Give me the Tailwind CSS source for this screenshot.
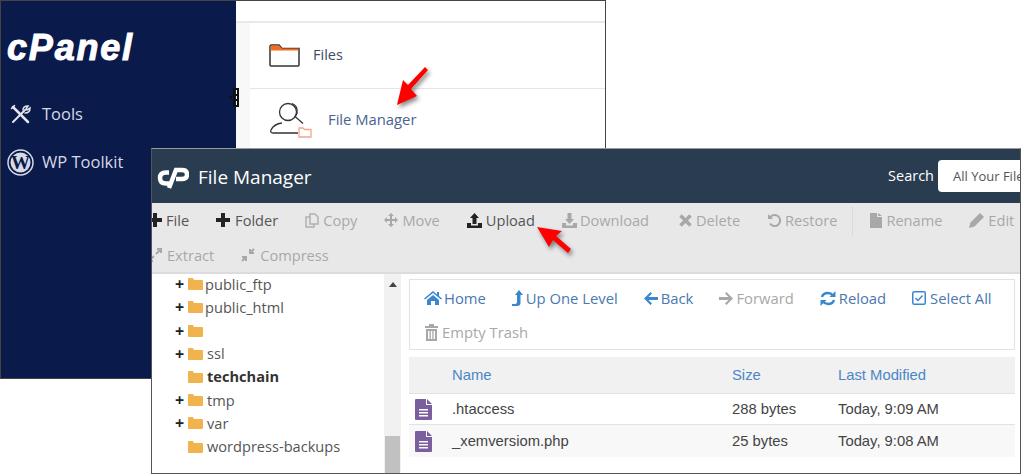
<!DOCTYPE html>
<html lang="en">
<head>
<meta charset="UTF-8">
<title>cPanel File Manager</title>
<script src="https://cdn.jsdelivr.net/npm/@tailwindcss/browser@4"></script>
</head>
<body class="bg-white">
<div class="relative w-[1024px] h-[476px] overflow-hidden bg-white font-['Open_Sans',sans-serif]">

  <!-- back window: cPanel home -->
  <div class="absolute left-0 top-0 w-[606px] h-[379px] border border-[#444] flex">
    <aside class="w-[235px] bg-[#0a1a4a] text-[#d6d9e6] flex flex-col">
      <div class="h-[85px] pl-[6px] pt-[23px] text-[36px] leading-[48px] font-['Liberation_Sans',sans-serif] font-bold italic text-white tracking-[1.800px] [-webkit-text-stroke:1px_white]">cPanel</div>
      <div class="h-[48px] flex items-center pl-[9px] gap-[11px] text-[16.500px] pt-[8px]">
        <svg class="w-[21px] h-[21px]" viewBox="0 0 21 21" fill="none" stroke="#e4e6ee" stroke-width="2" stroke-linecap="round"><path d="M3 18 15 6"/><path d="M13 6q0-4 5-4l-2 3 1 1 3-2q0 5-5 5" stroke-width="1.500"/><path d="M3 3 18 18" stroke-width="2.500"/><path d="M1.500 4.500 4.500 1.500" stroke-width="1.500"/></svg>
        <span>Tools</span>
      </div>
      <div class="h-[48px] flex items-center pl-[6px] gap-[8px] text-[16.500px] pt-[8px]">
        <svg class="w-[27px] h-[27px]" viewBox="0 0 27 27"><circle cx="13.500" cy="13.500" r="12.500" fill="none" stroke="#d6d9e6" stroke-width="1.500"/><circle cx="13.500" cy="13.500" r="10" fill="#d6d9e6"/><text x="13.500" y="20" text-anchor="middle" font-family="Liberation Serif, serif" font-weight="700" font-size="19" fill="#0a1a4a">W</text></svg>
        <span>WP Toolkit</span>
      </div>
    </aside>
    <div class="flex-1 bg-white pt-[20px] flex flex-col">
      <div class="flex-1 flex bg-[#f8f8f8] border-t-2 border-[#e9e9e9]">
        <div class="w-[14px]"></div>
        <div class="flex-1 bg-white">
          <div class="h-[66px] pb-[1px] flex items-center border-b border-[#e5e5e5] pl-[19px] gap-[13px] text-[14.500px] text-[#3d4a66]">
            <svg class="w-[31px] h-[23px]" viewBox="0 0 31 23"><path d="M1 21V2.500Q1 1 2.500 1H10l3 3.500H30V21q0 1-1 1H2q-1 0-1-1Z" fill="#fff" stroke="#333" stroke-width="1.500"/><path d="M1.500 2.500 2.500 1.500H10l3 3H29.500V6.500H1.500Z" fill="#f26d21"/></svg>
            <span>Files</span>
          </div>
          <div class="h-[60px] flex items-center pl-[20px] gap-[16px] text-[14.800px] text-[#4a6491]">
            <svg class="w-[42px] h-[38px]" viewBox="0 0 42 38" fill="none"><circle cx="18" cy="12" r="8.500" stroke="#333" stroke-width="1.300"/><path d="M22 3.500q6 2 5 10l-2 3 8 7" stroke="#333" stroke-width="1.300"/><path d="M28 33H3q-3 0-2-3 3-6 11-7" stroke="#333" stroke-width="1.300"/><path d="M29 37V28h4l1.500 1.500H41V37Z" fill="#fff" stroke="#f4a58a" stroke-width="1.300"/></svg>
            <span>File Manager</span>
          </div>
        </div>
      </div>
    </div>
  </div>

  <!-- resize handle on the divider -->
  <svg class="absolute left-[228px] top-[88px] w-[12px] h-[19px]" viewBox="0 0 12 19" fill="none" stroke="#111" stroke-width="2"><path d="M6 1h4v17H6ZM6 7h4M6 12h4"/><circle cx="2.500" cy="9.500" r="1.500" fill="#111" stroke="none"/></svg>

  <!-- front window: File Manager -->
  <div class="absolute left-[151px] top-[148px] w-[870px] h-[326px] border border-[#555] border-t-[#999] bg-white flex flex-col overflow-hidden">
    <header class="h-[54px] bg-[#2a3c50] flex items-center text-white shrink-0">
      <svg class="ml-[5px] mt-[3px] w-[32px] h-[22px]" viewBox="0 0 32 22" fill="none" stroke="#fff" stroke-width="4.500"><path d="M12 5.500H9Q3 5.500 3 11t6 5.500h3"/><path d="M12 21 19 3h6q5 0 5 4.500T25 12h-6"/></svg>
      <span class="ml-[9px] mt-[3px] text-[19px]">File Manager</span>
      <span class="ml-auto text-[14.500px]">Search</span>
      <div class="ml-[4px] w-[82px] h-[32px] bg-white rounded-l-[4px] pl-[15px] text-[13px] leading-[32px] text-[#555] whitespace-nowrap overflow-hidden">All Your Files</div>
    </header>

    <div class="h-[71px] shrink-0 bg-[#e8e8e8] border-b-2 border-[#dcdcdc] text-[14.600px] text-[#a8a8a8]">
      <div class="h-[35px] flex items-center gap-[27px] -ml-[4px] whitespace-nowrap">
        <span class="flex items-center gap-[4px] text-[#555]"><svg class="w-[14px] h-[14px]" viewBox="0 0 14 14" fill="#222"><path d="M5 0h4v5h5v4H9v5H5V9H0V5h5Z"/></svg>File</span>
        <span class="flex items-center gap-[5px] text-[#555]"><svg class="w-[14px] h-[14px]" viewBox="0 0 14 14" fill="#222"><path d="M5 0h4v5h5v4H9v5H5V9H0V5h5Z"/></svg>Folder</span>
        <span class="flex items-center gap-[4px]"><svg class="w-[14px] h-[15px]" viewBox="0 0 14 15" fill="none" stroke="#b0b0b0" stroke-width="1.500"><path d="M5 1h5l3 3v7H5ZM5 4H1v10h8v-3"/></svg>Copy</span>
        <span class="flex items-center gap-[4px]"><svg class="w-[14px] h-[14px]" viewBox="0 0 14 14" fill="#a8a8a8"><path d="M7 0l3 3H8v3h3V4l3 3-3 3V8H8v3h2l-3 3-3-3h2V8H3v2L0 7l3-3v2h3V3H4Z"/></svg>Move</span>
        <span class="flex items-center gap-[4px] text-[#555]"><svg class="w-[15px] h-[15px]" viewBox="0 0 15 15" fill="#222"><path d="M7.500 0 12 5H9.500v6h-4V5H3ZM0 10h4v2.500h7V10h4v5H0Z"/></svg>Upload</span>
        <span class="flex items-center gap-[3px]"><svg class="w-[15px] h-[15px]" viewBox="0 0 15 15" fill="#a8a8a8"><path d="M5.500 0h4v6H12l-4.500 5L3 6h2.500ZM0 10h4v2.500h7V10h4v5H0Z"/></svg>Download</span>
        <span class="ml-[3px] flex items-center gap-[4px]"><svg class="w-[13px] h-[13px]" viewBox="0 0 13 13" fill="none" stroke="#a8a8a8" stroke-width="3.500"><path d="M1.500 1.500l10 10M11.500 1.500l-10 10"/></svg>Delete</span>
        <span class="flex items-center gap-[4px]"><svg class="w-[14px] h-[14px]" viewBox="0 0 14 14" fill="none" stroke="#a8a8a8" stroke-width="2"><path d="M3 4.500a5.500 5.500 0 1 1 0 6"/><path d="M1 1v5h5" fill="#a8a8a8" stroke="none"/></svg>Restore</span>
        <span class="h-[28px] border-l border-dotted border-[#cfcfcf] -mx-[12px]"></span>
        <span class="ml-[2px] flex items-center gap-[4px]"><svg class="w-[12px] h-[15px]" viewBox="0 0 12 15" fill="#a8a8a8"><path d="M0 0h7v4h5v11H0ZM8 0l4 3H8Z"/></svg>Rename</span>
        <span class="flex items-center gap-[4px]"><svg class="w-[15px] h-[15px]" viewBox="0 0 15 15" fill="#a8a8a8"><path d="M11 0l4 4-9.500 9.500L0 15l1.500-5.500Z"/></svg>Edit</span>
      </div>
      <div class="h-[35px] flex items-center gap-[27px] -ml-[4px] whitespace-nowrap">
        <span class="flex items-center gap-[5px]"><svg class="w-[14px] h-[14px]" viewBox="0 0 14 14" fill="none" stroke="#a8a8a8" stroke-width="2"><path d="M8 6l5-5M6 8l-5 5M9 1h4v4M1 9v4h4"/></svg>Extract</span>
        <span class="flex items-center gap-[5px]"><svg class="w-[14px] h-[14px]" viewBox="0 0 14 14" fill="none" stroke="#a8a8a8" stroke-width="2"><path d="M13 1 9 5M1 13l4-4M9 1v4h4M1 9h4v4"/></svg>Compress</span>
      </div>
    </div>

    <div class="flex-1 flex min-h-0">
      <!-- folder tree -->
      <div class="w-[232px] shrink-0 -mt-[1.500px] pl-[23px] text-[14.600px] leading-[23.200px] text-[#555]">
        <div class="flex items-center gap-[3px]"><span class="w-[10px] text-[16px] font-bold text-[#222] leading-none">+</span><svg class="w-[15px] h-[12px]" viewBox="0 0 15 12" fill="#f0b34e"><path d="M0 1q0-1 1-1h4l1 2h8q1 0 1 1v8q0 1-1 1H1q-1 0-1-1Z"/></svg><span class="ml-[-1px]">public_ftp</span></div>
        <div class="flex items-center gap-[3px]"><span class="w-[10px] text-[16px] font-bold text-[#222] leading-none">+</span><svg class="w-[15px] h-[12px]" viewBox="0 0 15 12" fill="#f0b34e"><path d="M0 1q0-1 1-1h4l1 2h8q1 0 1 1v8q0 1-1 1H1q-1 0-1-1Z"/></svg><span class="ml-[-1px]">public_html</span></div>
        <div class="flex items-center gap-[3px] h-[23.200px]"><span class="w-[10px] text-[16px] font-bold text-[#222] leading-none">+</span><svg class="w-[15px] h-[12px]" viewBox="0 0 15 12" fill="#f0b34e"><path d="M0 1q0-1 1-1h4l1 2h8q1 0 1 1v8q0 1-1 1H1q-1 0-1-1Z"/></svg></div>
        <div class="flex items-center gap-[3px]"><span class="w-[10px] text-[16px] font-bold text-[#222] leading-none">+</span><svg class="w-[15px] h-[12px]" viewBox="0 0 15 12" fill="#f0b34e"><path d="M0 1q0-1 1-1h4l1 2h8q1 0 1 1v8q0 1-1 1H1q-1 0-1-1Z"/></svg><span class="ml-[1px]">ssl</span></div>
        <div class="flex items-center gap-[4px] pl-[13px] font-bold text-[#333]"><svg class="w-[15px] h-[12px]" viewBox="0 0 15 12" fill="#f0b34e"><path d="M0 1q0-1 1-1h4l1 2h8q1 0 1 1v8q0 1-1 1H1q-1 0-1-1Z"/></svg><span>techchain</span></div>
        <div class="flex items-center gap-[3px]"><span class="w-[10px] text-[16px] font-bold text-[#222] leading-none">+</span><svg class="w-[15px] h-[12px]" viewBox="0 0 15 12" fill="#f0b34e"><path d="M0 1q0-1 1-1h4l1 2h8q1 0 1 1v8q0 1-1 1H1q-1 0-1-1Z"/></svg><span class="ml-[1px]">tmp</span></div>
        <div class="flex items-center gap-[3px]"><span class="w-[10px] text-[16px] font-bold text-[#222] leading-none">+</span><svg class="w-[15px] h-[12px]" viewBox="0 0 15 12" fill="#f0b34e"><path d="M0 1q0-1 1-1h4l1 2h8q1 0 1 1v8q0 1-1 1H1q-1 0-1-1Z"/></svg><span class="ml-[1px]">var</span></div>
        <div class="flex items-center gap-[4px] pl-[13px]"><svg class="w-[15px] h-[12px]" viewBox="0 0 15 12" fill="#f0b34e"><path d="M0 1q0-1 1-1h4l1 2h8q1 0 1 1v8q0 1-1 1H1q-1 0-1-1Z"/></svg><span>wordpress-backups</span></div>
      </div>
      <!-- scrollbar -->
      <div class="w-[17px] shrink-0 bg-[#f1f1f1] flex flex-col justify-between">
        <div class="pt-[8px] flex justify-center"><div class="w-0 h-0 border-x-[4px] border-x-transparent border-b-[5px] border-b-[#444]"></div></div>
        <div class="h-[37px] mx-[1px] bg-[#c1c1c1]"></div>
      </div>
      <!-- file pane -->
      <div class="flex-1 pl-[8px] pr-[5px] pt-[5px]">
        <div class="h-[71px] border border-[#e2e2e2] text-[14.800px] text-[#4a78b0]">
          <div class="h-[35px] flex items-center pl-[14px] gap-[26px] pt-[1px] whitespace-nowrap">
            <span class="flex items-center gap-[2px]"><svg class="w-[18px] h-[14px]" viewBox="0 0 18 14" fill="#3a87d0"><path d="M9 0l4 3.500V1h2v4l3 2.500-1 1L9 2 1 8.500l-1-1ZM3 9l6-5 6 5v5h-4v-4H7v4H3Z"/></svg>Home</span>
            <span class="flex items-center gap-[3px]"><svg class="w-[11px] h-[16px]" viewBox="0 0 11 16" fill="#3a87d0"><path d="M7 0l4 5H8.500v8Q8.500 16 5 16H0v-2h3q2 0 2-2V5H3Z"/></svg>Up One Level</span>
            <span class="flex items-center gap-[3px]"><svg class="w-[14px] h-[13px]" viewBox="0 0 14 13" fill="#3a87d0"><path d="M6.500 0 8 1.500 4.500 5H14v3H4.500L8 11.500 6.500 13 0 6.500Z"/></svg>Back</span>
            <span class="flex items-center gap-[3px] text-[#a8a8a8]"><svg class="w-[14px] h-[13px]" viewBox="0 0 14 13" fill="#a8a8a8"><path d="M7.500 0 6 1.500 9.500 5H0v3h9.500L6 11.500 7.500 13 14 6.500Z"/></svg>Forward</span>
            <span class="flex items-center gap-[3px]"><svg class="w-[16px] h-[15px]" viewBox="0 0 16 15" fill="none" stroke="#3a87d0" stroke-width="2.500"><path d="M2 6q1-4 6-4 3 0 5 2.500M14 9q-1 4-6 4-3 0-5-2.500"/><path d="M15.500 0v6h-6ZM.500 15V9h6Z" fill="#3a87d0" stroke="none"/></svg>Reload</span>
            <span class="flex items-center gap-[4px]"><svg class="w-[14px] h-[14px]" viewBox="0 0 14 14" fill="none" stroke="#3a87d0" stroke-width="1.500"><rect x=".750" y=".750" width="12.500" height="12.500" rx="1.500"/><path d="M3.500 7l2.500 2.500 4.500-5"/></svg>Select All</span>
          </div>
          <div class="h-[35px] flex items-center pl-[15px] gap-[4px] text-[#a8a8a8]">
            <svg class="w-[13px] h-[17px]" viewBox="0 0 13 17" fill="#a8a8a8"><path d="M4 0h5v2h4v2H0V2h4ZM1 5h11v12H1ZM3 7v8h1.500V7Zm2.800 0v8h1.500V7Zm2.800 0v8H10V7Z" fill-rule="evenodd"/></svg>
            <span>Empty Trash</span>
          </div>
        </div>
        <div class="mt-[7px] font-['Liberation_Sans',sans-serif] text-[14.800px]">
          <div class="h-[37px] flex items-center bg-[#f1f1f1] border-b border-[#e2e2e2] text-[#4a86c8]">
            <span class="ml-[43px] w-[280px]">Name</span><span class="w-[106px]">Size</span><span>Last Modified</span>
          </div>
          <div class="h-[31px] flex items-center border-b border-[#e2e2e2] text-[#444]">
            <svg class="ml-[6px] w-[17px] h-[21px]" viewBox="0 0 17 21" fill="#7b5e9e"><path d="M1 0h10v6h6v14q0 1-1 1H1q-1 0-1-1V1q0-1 1-1ZM12 0l5 5h-5ZM4 10v1.500h9V10Zm0 3v1.500h9V13Zm0 3v1.500h9V16Z" fill-rule="evenodd"/></svg>
            <span class="ml-[20px] w-[280px]">.htaccess</span><span class="w-[106px]">288 bytes</span><span>Today, 9:09 AM</span>
          </div>
          <div class="h-[32px] flex items-center bg-[#f8f8f8] text-[#444]">
            <svg class="ml-[6px] w-[17px] h-[21px]" viewBox="0 0 17 21" fill="#7b5e9e"><path d="M1 0h10v6h6v14q0 1-1 1H1q-1 0-1-1V1q0-1 1-1ZM12 0l5 5h-5ZM4 10v1.500h9V10Zm0 3v1.500h9V13Zm0 3v1.500h9V16Z" fill-rule="evenodd"/></svg>
            <span class="ml-[20px] w-[280px]">_xemversiom.php</span><span class="w-[106px]">25 bytes</span><span>Today, 9:08 AM</span>
          </div>
        </div>
      </div>
    </div>
  </div>

  <!-- red callout arrows -->
  <svg class="absolute left-[390px] top-[60px] w-[50px] h-[55px] drop-shadow-[2px_3px_2px_rgba(0,0,0,0.45)]" viewBox="0 0 50 55" fill="#f00"><path d="M7 45 13 20l5 5L35 7l3 3-17 19 6 7Z"/></svg>
  <svg class="absolute left-[530px] top-[220px] w-[50px] h-[45px] drop-shadow-[2px_3px_2px_rgba(0,0,0,0.45)]" viewBox="0 0 50 45" fill="#f00"><path d="M7 7 32 11l-6 5L41 29l-3 4-15-13-4 7Z"/></svg>
</div>
</body>
</html>
